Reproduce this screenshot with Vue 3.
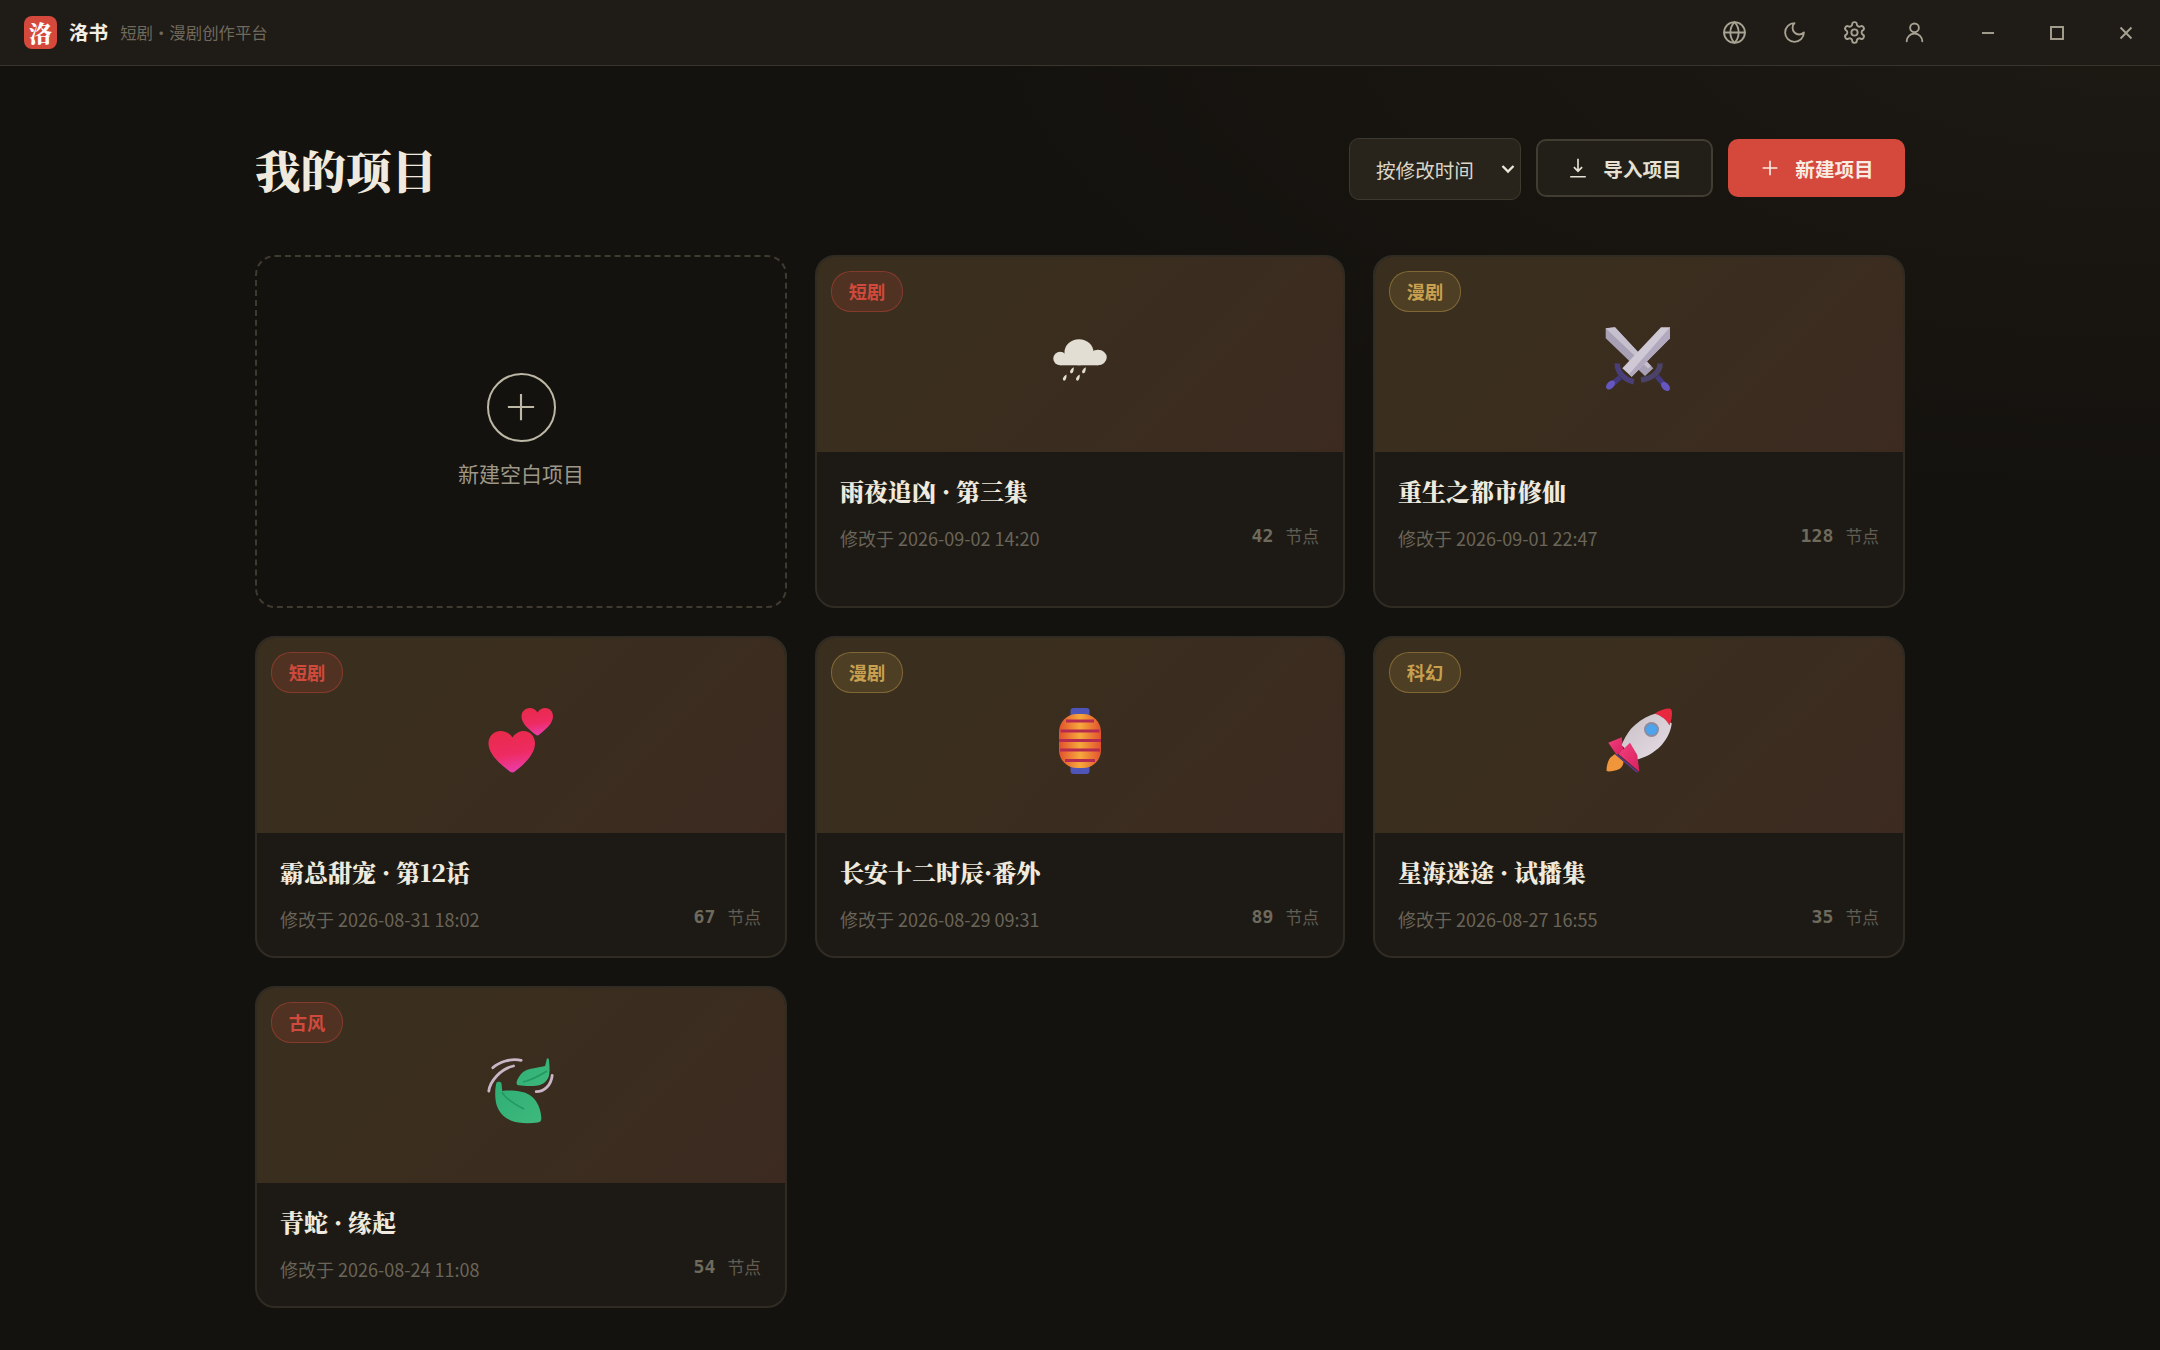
<script setup>
const projects = [
  { id: 1, tag: "短剧", tone: "red", icon: "rain", title: "雨夜追凶 · 第三集", date: "2026-09-02 14:20", nodes: 42 },
  { id: 2, tag: "漫剧", tone: "gold", icon: "swords", title: "重生之都市修仙", date: "2026-09-01 22:47", nodes: 128 },
  { id: 3, tag: "短剧", tone: "red", icon: "hearts", title: "霸总甜宠 · 第12话", date: "2026-08-31 18:02", nodes: 67 },
  { id: 4, tag: "漫剧", tone: "gold", icon: "lantern", title: "长安十二时辰·番外", date: "2026-08-29 09:31", nodes: 89 },
  { id: 5, tag: "科幻", tone: "gold", icon: "rocket", title: "星海迷途 · 试播集", date: "2026-08-27 16:55", nodes: 35 },
  { id: 6, tag: "古风", tone: "red", icon: "leaves", title: "青蛇 · 缘起", date: "2026-08-24 11:08", nodes: 54 },
];
</script>

<template>
  <div class="app">
    <header class="titlebar">
      <div class="brand">
        <span class="logo">洛</span>
        <span class="name">洛书</span>
        <span class="slogan">短剧・漫剧创作平台</span>
      </div>
      <div class="tools">
        <button class="tool">
          <svg viewBox="0 0 24 24"><circle cx="12" cy="12" r="10" /><path d="M12 2a14.5 14.5 0 0 0 0 20 14.5 14.5 0 0 0 0-20" /><path d="M2 12h20" /></svg>
        </button>
        <button class="tool">
          <svg viewBox="0 0 24 24"><path d="M12 3a6 6 0 0 0 9 9 9 9 0 1 1-9-9Z" /></svg>
        </button>
        <button class="tool">
          <svg viewBox="0 0 24 24"><path d="M12.22 2h-.44a2 2 0 0 0-2 2v.18a2 2 0 0 1-1 1.73l-.43.25a2 2 0 0 1-2 0l-.15-.08a2 2 0 0 0-2.73.73l-.22.38a2 2 0 0 0 .73 2.73l.15.1a2 2 0 0 1 1 1.72v.51a2 2 0 0 1-1 1.74l-.15.09a2 2 0 0 0-.73 2.73l.22.38a2 2 0 0 0 2.73.73l.15-.08a2 2 0 0 1 2 0l.43.25a2 2 0 0 1 1 1.73V20a2 2 0 0 0 2 2h.44a2 2 0 0 0 2-2v-.18a2 2 0 0 1 1-1.73l.43-.25a2 2 0 0 1 2 0l.15.08a2 2 0 0 0 2.73-.73l.22-.39a2 2 0 0 0-.73-2.73l-.15-.08a2 2 0 0 1-1-1.74v-.5a2 2 0 0 1 1-1.74l.15-.09a2 2 0 0 0 .73-2.73l-.22-.38a2 2 0 0 0-2.73-.73l-.15.08a2 2 0 0 1-2 0l-.43-.25a2 2 0 0 1-1-1.73V4a2 2 0 0 0-2-2z" /><circle cx="12" cy="12" r="3" /></svg>
        </button>
        <button class="tool">
          <svg viewBox="0 0 24 24"><circle cx="12" cy="7.5" r="4.2" /><path d="M4.500 20.500a7.500 7.500 0 0 1 15 0" /></svg>
        </button>
      </div>
      <div class="win">
        <button class="win-btn"><svg viewBox="0 0 14 14"><path d="M1 7h12" /></svg></button>
        <button class="win-btn"><svg viewBox="0 0 14 14"><rect x="1" y="1" width="12" height="12" /></svg></button>
        <button class="win-btn"><svg viewBox="0 0 14 14"><path d="M1.500 1.500l11 11M12.500 1.500l-11 11" /></svg></button>
      </div>
    </header>

    <main class="main">
      <div class="head">
        <h1 class="heading">我的项目</h1>
        <div class="actions">
          <div class="sort-wrap">
            <select class="sort">
              <option>按修改时间</option>
              <option>按创建时间</option>
              <option>按名称</option>
            </select>
            <svg class="chevron" viewBox="0 0 14 10"><path d="M1.500 2l5.500 5.500L12.500 2" /></svg>
          </div>
          <button class="btn btn-ghost">
            <svg viewBox="0 0 24 24"><path d="M12 2v13M7.500 11l4.500 4.500 4.500-4.500M3.500 21.500h17" /></svg>
            导入项目
          </button>
          <button class="btn btn-red">
            <svg viewBox="0 0 24 24"><path d="M12 4v16M4 12h16" /></svg>
            新建项目
          </button>
        </div>
      </div>

      <div class="grid">
        <div class="new-card">
          <span class="new-circle">
            <svg viewBox="0 0 24 24"><path d="M12 1.500v21M1.500 12h21" /></svg>
          </span>
          <span class="new-label">新建空白项目</span>
        </div>

        <article v-for="p in projects" :key="p.id" class="card">
          <div class="cover">
            <span class="tag" :class="p.tone">{{ p.tag }}</span>
            <svg class="emoji" viewBox="0 0 72 72">
              <defs>
                <linearGradient id="heart" x1="0.4" y1="0" x2="0.6" y2="1">
                  <stop offset="0" stop-color="#e92a4b" />
                  <stop offset="0.55" stop-color="#ee2b62" />
                  <stop offset="1" stop-color="#ea3eb0" />
                </linearGradient>
                <linearGradient id="lamp" x1="0" y1="0" x2="1" y2="0">
                  <stop offset="0" stop-color="#e2502c" />
                  <stop offset="0.5" stop-color="#f6a93c" />
                  <stop offset="1" stop-color="#e2522e" />
                </linearGradient>
                <linearGradient id="fin" x1="0" y1="0" x2="1" y2="1">
                  <stop offset="0" stop-color="#f2407e" />
                  <stop offset="1" stop-color="#d8205f" />
                </linearGradient>
                <linearGradient id="hull" x1="0" y1="0" x2="1" y2="1">
                  <stop offset="0" stop-color="#c8bfc6" />
                  <stop offset="1" stop-color="#e6dde6" />
                </linearGradient>
                <linearGradient id="leaf" x1="0" y1="0" x2="1" y2="1">
                  <stop offset="0" stop-color="#2eae74" />
                  <stop offset="1" stop-color="#3fb97d" />
                </linearGradient>
              </defs>

              <g v-if="p.icon === 'rain'" fill="#e3ded3">
                <ellipse cx="35" cy="29.300" rx="14.500" ry="13" />
                <ellipse cx="16.200" cy="35.500" rx="6.900" ry="6.800" />
                <ellipse cx="54" cy="34.500" rx="8.700" ry="7.800" />
                <rect x="16" y="31" width="38" height="11.300" />
                <path d="M29.700 44.200c.2 2.300-.2 4.600-1.400 5.700-1.100.9-2.500-.1-2.200-1.700.3-1.500 2-3 3.600-4Z" />
                <path d="M41.700 44.200c.2 2.300-.2 4.600-1.400 5.700-1.100.9-2.500-.1-2.200-1.700.3-1.500 2-3 3.600-4Z" />
                <path d="M22.500 51.600c.2 2.300-.2 4.600-1.400 5.700-1.100.9-2.500-.1-2.200-1.700.3-1.500 2-3 3.600-4Z" />
                <path d="M35.700 51.600c.2 2.300-.2 4.600-1.400 5.700-1.100.9-2.500-.1-2.200-1.700.3-1.500 2-3 3.600-4Z" />
              </g>

              <g v-else-if="p.icon === 'swords'">
                <path d="M2.700 5.300 12 4.300l38.300 41L42 53 2.700 15.300Z" fill="#a8a0b4" />
                <path d="M2.700 5.300 12 4.300 48 43l-3 2.500Z" fill="#c6bfcd" />
                <path d="M14.300 40.300c-.3 8 6 16.600 16.700 18.400" fill="none" stroke="#4a3e78" stroke-width="5.500" />
                <path d="M57 40.300c.3 8-6.500 15-19 16.700" fill="none" stroke="#4b4367" stroke-width="5.500" />
                <path d="M67 4.300v11L28.700 53.700l-9.400-8.400L58 4.300Z" fill="#cfc9d6" />
                <path d="M67 4.300v11L28.700 53.700l-2.700-2.400Z" fill="#b2a9bf" />
                <path d="M17 54.500l-7.500 6.500" stroke="#453a80" stroke-width="5" />
                <path d="M54 53.500l7 8" stroke="#453a80" stroke-width="5" />
                <ellipse cx="7.500" cy="62" rx="3.400" ry="5.400" transform="rotate(45 7.500 62)" fill="#6557bf" />
                <ellipse cx="62.500" cy="63.500" rx="3.400" ry="5.400" transform="rotate(-45 62.500 63.500)" fill="#6557bf" />
              </g>

              <g v-else-if="p.icon === 'hearts'" fill="url(#heart)">
                <path d="M27.500 68.500c-1.300 0-2.700-1-4-2C15 60 3.500 50 3.500 39.500 3.500 32 9 27 15.500 27c5 0 9.500 2.500 12 6.500 2.500-4 7-6.500 11-6.500C45 27 50 32 50 39.500 50 50 39 60.500 31 66.500c-1.300 1-2.200 2-3.500 2Z" />
                <path d="M52.500 31.500c-1 0-1.800-.8-2.800-1.500C44 25.500 36.500 19.500 36.500 12.500 36.500 7.500 40.500 4 44.800 4c3.200 0 6 1.500 7.700 4.500C54.200 5.500 57 4 60.200 4 65 4 68 7.500 68 12.500c0 7-7.500 13-13 17.500-1 .7-1.500 1.500-2.500 1.500Z" />
              </g>

              <g v-else-if="p.icon === 'lantern'">
                <rect x="26.500" y="4" width="19" height="10" rx="3" fill="#4f55b8" />
                <rect x="26.500" y="60" width="19" height="10" rx="3" fill="#4f55b8" />
                <rect x="15" y="10" width="42" height="54" rx="18" fill="url(#lamp)" />
                <g fill="none" stroke="#b52a50" stroke-width="2.800">
                  <path d="M22 17h28M16.500 27h39M15 36.500h42M16 46h40M21 56.500h30" />
                </g>
              </g>

              <g v-else-if="p.icon === 'rocket'">
                <path d="M3.700 67c-.6-3 1-11 4.300-14l4-3 8.500 7.500c-.2 4.500-3 7.500-6.500 8.500-3.500.8-8.500 2.200-10.300 1Z" fill="#f0953a" />
                <path d="M5.300 38.700 18.700 33.300l1.600 12.700-6.600 5Z" fill="url(#fin)" />
                <path d="M18.700 41C22 33 26 26 32 21c7-6 14-10 21.700-11.700L68.700 19.300C68 27 64 35 58.700 41 50 50 41 54 32 56Z" fill="url(#hull)" />
                <path d="M12 50.500l2-.5 21.500 18-2 .5Z" fill="#5b3a8a" />
                <path d="M15.300 50 27 38.700 34.300 51l2 16.700Z" fill="url(#fin)" />
                <path d="M51.500 9.800C56 6.500 62 4.500 66 4.500c2.500 0 3 2 3 5 0 3.500-.8 7.500-2.700 12-2-5-7.800-10-14.800-11.700Z" fill="#e8283f" />
                <circle cx="48.500" cy="25.500" r="7.500" fill="#8d8a9e" />
                <circle cx="48.500" cy="25.500" r="5.600" fill="#4da3ec" />
              </g>

              <g v-else-if="p.icon === 'leaves'">
                <path d="M11.500 28.500c1.500-1.200 4.500-1 5 1l.8 7.500c8-1 19.500-.5 26.500 3.500 6 3.500 11.500 10.500 12.500 23 .2 3-.8 4.500-3.500 5-9 1.300-20.500 1-27-2-7.500-3.500-12.500-9-14.500-16.500-1.500-6.500-1.500-15 .2-21.500Z" fill="url(#leaf)" />
                <path d="M17 38c3 6 12 12 22 17" fill="none" stroke="#23985f" stroke-width="1.600" />
                <path d="M62 4.300c1.500 0 2 .7 2 2 .3 3.700 1 9 .2 14.500-1 4.700-4.700 9-9.200 10.200-5.500 1.500-15 1-21.500.2-1.500-.2-2.200-1.500-1.900-3 .8-3.500 4-9 8.500-11.500 6-2.800 14-3 20-4.800Z" fill="url(#leaf)" />
                <path d="M62 17c-8 5-15 9-24 11" fill="none" stroke="#23985f" stroke-width="1.600" />
                <g fill="none" stroke="#cbb6c8" stroke-width="2.800" stroke-linecap="round">
                  <path d="M7.800 13.700C14 8 26 4 36.200 6.300" />
                  <path d="M3.800 37C5 27 16 14.500 28.500 12" />
                  <path d="M51.200 37.700c8 0 15-6.500 16-16.400" />
                </g>
              </g>
            </svg>
          </div>
          <div class="info">
            <h3 class="title">{{ p.title }}</h3>
            <div class="meta">
              <span class="date">修改于 {{ p.date }}</span>
              <span class="count"><b>{{ p.nodes }}</b><em>节点</em></span>
            </div>
          </div>
        </article>
      </div>
    </main>
  </div>
</template>

<style scoped>
.app {
  min-height: 100vh;
  box-sizing: border-box;
  background: radial-gradient(1200px 500px at 100% 0, #1d1913 0, #14120e 100%) #14120e;
  color: #ece7da;
  font-family: "Noto Sans CJK SC", sans-serif;
}

.titlebar {
  display: flex;
  align-items: center;
  height: 66px;
  box-sizing: border-box;
  padding-left: 24px;
  background: #1f1b16;
  border-bottom: 1px solid #38342c;
}

.brand {
  display: flex;
  align-items: center;
  flex: 1;
}

.logo {
  width: 33px;
  height: 33px;
  border-radius: 8px;
  background: #d5493d;
  color: #fff;
  font-family: "Noto Serif CJK SC", "Noto Sans CJK SC", serif;
  font-weight: 900;
  font-size: 23px;
  line-height: 33px;
  text-align: center;
}

.name {
  margin-left: 12px;
  margin-top: -2px;
  font-size: 19.6px;
  font-weight: 700;
  color: #f3efe4;
}

.slogan {
  margin-left: 12px;
  margin-top: -2px;
  font-size: 16.4px;
  color: #6f6a5d;
}

.tools {
  display: flex;
  gap: 16px;
  margin-right: 17px;
}

.tool,
.win-btn {
  display: flex;
  align-items: center;
  justify-content: center;
  border: none;
  background: none;
  padding: 0;
}

.tool {
  width: 44px;
  height: 44px;
}

.tool svg {
  width: 25px;
  height: 25px;
  fill: none;
  stroke: #a8a292;
  stroke-width: 1.8;
  stroke-linecap: round;
  stroke-linejoin: round;
}

.win {
  display: flex;
}

.win-btn {
  width: 69px;
  height: 65px;
}

.win-btn svg {
  width: 14px;
  height: 14px;
  fill: none;
  stroke: #a8a292;
  stroke-width: 1.9;
}

.main {
  padding: 72px 255px 0;
}

.head {
  display: flex;
  align-items: center;
  justify-content: space-between;
  margin-bottom: 55px;
  height: 62px;
}

.heading {
  margin: 0;
  font-family: "Noto Serif CJK SC", "Noto Sans CJK SC", serif;
  font-size: 45.5px;
  font-weight: 900;
  color: #efeadd;
}

.actions {
  display: flex;
  align-items: flex-start;
  gap: 15px;
}

.sort-wrap {
  position: relative;
}

.sort {
  display: block;
  width: 172px;
  height: 62px;
  box-sizing: border-box;
  padding: 0 8px 0 26px;
  appearance: none;
  background: #28241c;
  border: 1px solid #3f3a30;
  border-radius: 10px;
  color: #dcd6c7;
  font-family: inherit;
  font-size: 19.6px;
  outline: none;
}

.chevron {
  position: absolute;
  top: 26px;
  right: 6px;
  width: 14px;
  height: 10px;
  fill: none;
  stroke: #ece7da;
  stroke-width: 2.4;
  pointer-events: none;
}

.btn {
  display: flex;
  align-items: center;
  justify-content: center;
  gap: 14px;
  width: 177px;
  height: 58px;
  margin-top: 1px;
  box-sizing: border-box;
  border-radius: 10px;
  font-family: inherit;
  font-size: 19.6px;
  font-weight: 700;
}

.btn svg {
  width: 22px;
  height: 22px;
  fill: none;
  stroke: currentColor;
  stroke-width: 1.8;
}

.btn-ghost {
  background: #221f18;
  border: 2px solid #423d32;
  color: #e6e1d3;
}

.btn-red {
  background: #d5493d;
  border: none;
  color: #f8ece2;
}

.grid {
  display: grid;
  grid-template-columns: 532px 530px 532px;
  gap: 28px;
}

.new-card {
  display: flex;
  flex-direction: column;
  align-items: center;
  justify-content: center;
  gap: 16px;
  min-height: 353px;
  box-sizing: border-box;
  padding-bottom: 3px;
  border: 2px dashed #403b31;
  border-radius: 20px;
}

.new-circle {
  display: flex;
  align-items: center;
  justify-content: center;
  width: 69px;
  height: 69px;
  box-sizing: border-box;
  border: 2px solid #bdb7a5;
  border-radius: 50%;
}

.new-circle svg {
  width: 30px;
  height: 30px;
  fill: none;
  stroke: #bdb7a5;
  stroke-width: 1.7;
}

.new-label {
  font-size: 21px;
  color: #9d9788;
}

.card {
  overflow: hidden;
  box-sizing: border-box;
  background: #1d1a15;
  border: 2px solid #302c24;
  border-radius: 20px;
}

.cover {
  position: relative;
  display: flex;
  align-items: center;
  justify-content: center;
  height: 195px;
  box-sizing: border-box;
  padding-top: 8px;
  background: linear-gradient(135deg, #3a2f1e, #3a2d1f 60%, #3c2a20);
}

.tag {
  position: absolute;
  top: 14px;
  left: 14px;
  width: 72px;
  height: 41px;
  box-sizing: border-box;
  border-radius: 20px;
  font-size: 18.2px;
  font-weight: 700;
  line-height: 39px;
  text-align: center;
}

.tag.red {
  color: #cf4a3c;
  background: rgba(217, 73, 61, 0.14);
  border: 1.5px solid rgba(217, 73, 61, 0.38);
}

.tag.gold {
  color: #c9a04f;
  background: rgba(201, 160, 79, 0.14);
  border: 1.5px solid rgba(201, 160, 79, 0.42);
}

.emoji {
  width: 72px;
  height: 72px;
}

.info {
  padding: 23px 24px 21px 23px;
}

.title {
  margin: 0 0 15px;
  font-family: "Noto Serif CJK SC", "Noto Sans CJK SC", serif;
  font-size: 24px;
  font-weight: 900;
  line-height: 32px;
  color: #efeadd;
}

.meta {
  display: flex;
  align-items: flex-start;
  justify-content: space-between;
}

.date {
  font-size: 18px;
  line-height: 32px;
  color: #6a6558;
}

.count {
  display: flex;
  gap: 12px;
  margin-top: 1px;
  font-size: 16.8px;
  line-height: 26px;
  color: #625d51;
}

.count b {
  font-family: "DejaVu Sans Mono", "Liberation Mono", monospace;
  font-size: 18.2px;
  font-weight: 700;
  color: #6e6a5c;
}

.count em {
  font-style: normal;
}
</style>

<style>
html,
body {
  background: #14120e;
}
</style>
